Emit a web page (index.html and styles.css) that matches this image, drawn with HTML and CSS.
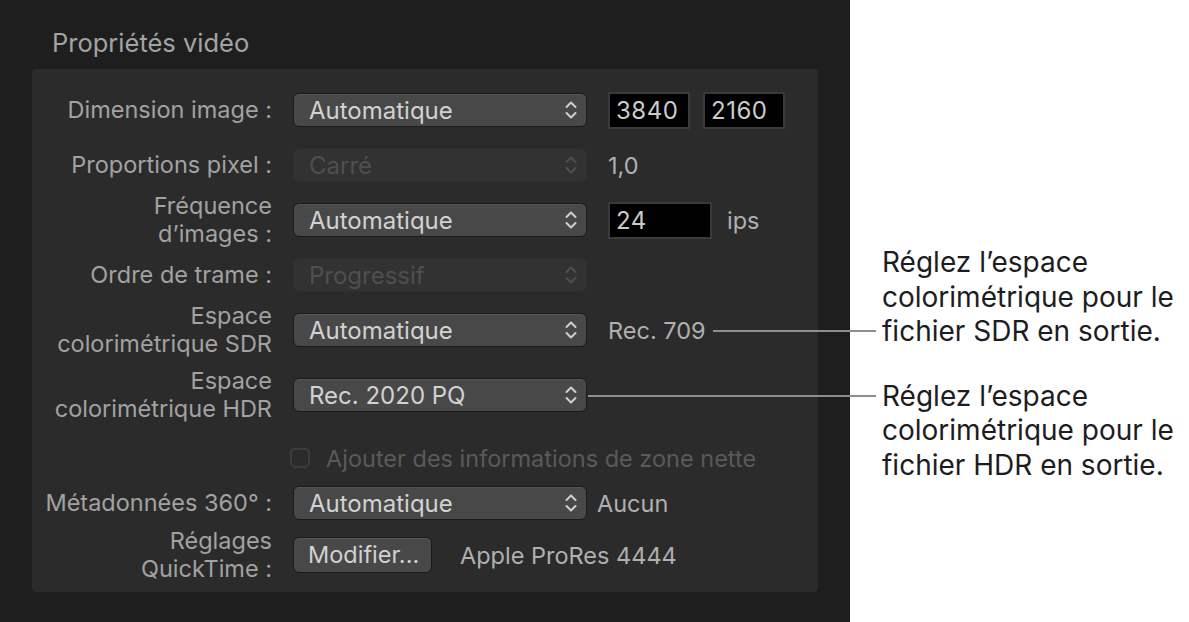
FILE: index.html
```html
<!DOCTYPE html>
<html lang="fr">

<head>
    <meta charset="UTF-8">
    <meta name="viewport" content="width=device-width, initial-scale=1.0">
    <title>Propriétés vidéo</title>
    <link rel="stylesheet" href="styles.css">
</head>

<body>
    <div class="page">
        <div class="panel">
            <h2 class="panel-title">Propriétés vidéo</h2>

            <div class="group">
                <div class="row">
                    <div class="label">Dimension image :</div>
                    <div class="popup">
                        <span>Automatique</span>
                        <svg class="chevrons" width="14" height="22" viewBox="0 0 14 22"><path d="M2.5 8 L7 3.5 L11.5 8 M2.5 14 L7 18.5 L11.5 14" /></svg>
                    </div>
                    <div class="field field-size">3840</div>
                    <div class="field field-size field-next">2160</div>
                </div>

                <div class="row">
                    <div class="label">Proportions pixel :</div>
                    <div class="popup disabled">
                        <span>Carré</span>
                        <svg class="chevrons" width="14" height="22" viewBox="0 0 14 22"><path d="M2.5 8 L7 3.5 L11.5 8 M2.5 14 L7 18.5 L11.5 14" /></svg>
                    </div>
                    <div class="value">1,0</div>
                </div>

                <div class="row">
                    <div class="label">Fréquence<br>d’images :</div>
                    <div class="popup">
                        <span>Automatique</span>
                        <svg class="chevrons" width="14" height="22" viewBox="0 0 14 22"><path d="M2.5 8 L7 3.5 L11.5 8 M2.5 14 L7 18.5 L11.5 14" /></svg>
                    </div>
                    <div class="field field-rate">24</div>
                    <div class="value value-unit">ips</div>
                </div>

                <div class="row">
                    <div class="label">Ordre de trame :</div>
                    <div class="popup disabled">
                        <span>Progressif</span>
                        <svg class="chevrons" width="14" height="22" viewBox="0 0 14 22"><path d="M2.5 8 L7 3.5 L11.5 8 M2.5 14 L7 18.5 L11.5 14" /></svg>
                    </div>
                </div>

                <div class="row">
                    <div class="label">Espace<br>colorimétrique SDR</div>
                    <div class="popup">
                        <span>Automatique</span>
                        <svg class="chevrons" width="14" height="22" viewBox="0 0 14 22"><path d="M2.5 8 L7 3.5 L11.5 8 M2.5 14 L7 18.5 L11.5 14" /></svg>
                    </div>
                    <div class="value">Rec. 709</div>
                </div>

                <div class="row row-hdr">
                    <div class="label">Espace<br>colorimétrique HDR</div>
                    <div class="popup">
                        <span>Rec. 2020 PQ</span>
                        <svg class="chevrons" width="14" height="22" viewBox="0 0 14 22"><path d="M2.5 8 L7 3.5 L11.5 8 M2.5 14 L7 18.5 L11.5 14" /></svg>
                    </div>
                </div>

                <div class="row row-check">
                    <div class="label"></div>
                    <div class="checkbox"></div>
                    <div class="check-text">Ajouter des informations de zone nette</div>
                </div>

                <div class="row row-meta">
                    <div class="label">Métadonnées 360° :</div>
                    <div class="popup">
                        <span>Automatique</span>
                        <svg class="chevrons" width="14" height="22" viewBox="0 0 14 22"><path d="M2.5 8 L7 3.5 L11.5 8 M2.5 14 L7 18.5 L11.5 14" /></svg>
                    </div>
                    <div class="value value-near">Aucun</div>
                </div>

                <div class="row">
                    <div class="label">Réglages<br>QuickTime :</div>
                    <div class="button">Modifier...</div>
                    <div class="value value-far">Apple ProRes 4444</div>
                </div>
            </div>
        </div>

        <div class="notes">
            <p class="note">Réglez l’espace colorimétrique pour le fichier SDR en sortie.</p>
            <p class="note note-hdr">Réglez l’espace colorimétrique pour le fichier HDR en sortie.</p>
        </div>

        <div class="leader leader-sdr"></div>
        <div class="leader leader-hdr"></div>
    </div>
</body>

</html>
```

FILE: styles.css
```css
body {
    margin: 0;
    background-color: #fff;
    font-family: Inter, "Noto Sans", sans-serif;
}

.page {
    position: relative;
    display: flex;
    width: 1189px;
    height: 622px;
    overflow: hidden;
}

.panel {
    width: 850px;
    height: 622px;
    background-color: #1e1e1e;
}

.panel-title {
    margin: 0;
    padding: 28px 0 0 52px;
    height: 69px;
    box-sizing: border-box;
    font-size: 25.5px;
    font-weight: 400;
    line-height: 30px;
    color: #a3a3a3;
}

.group {
    margin: 0 32px;
    height: 523px;
    box-sizing: border-box;
    padding-top: 19px;
    background-color: #2b2b2b;
    border-radius: 4px;
}

.row {
    display: flex;
    align-items: center;
    height: 44px;
    margin-bottom: 11px;
}

.row-hdr {
    margin-top: 21px;
    margin-bottom: 19px;
}

.row-check {
    margin-bottom: 1px;
}

.row-meta {
    margin-bottom: 8px;
}

.label {
    flex: none;
    width: 240px;
    margin-right: 21px;
    text-align: right;
    font-size: 23.5px;
    line-height: 28.5px;
    color: #a2a2a2;
}

.popup {
    flex: none;
    display: flex;
    align-items: center;
    justify-content: space-between;
    width: 294px;
    height: 34px;
    box-sizing: border-box;
    padding: 0 8px 0 15px;
    background-color: #484848;
    border: 1px solid #1a1a1a;
    border-radius: 6px;
    box-shadow: inset 0 1px 0 #555;
    font-size: 24px;
    color: #d2d2d2;
}

.chevrons path {
    fill: none;
    stroke: #cfcfcf;
    stroke-width: 2;
    stroke-linecap: round;
    stroke-linejoin: round;
}

.popup.disabled {
    background-color: #323232;
    border-color: #2e2e2e;
    box-shadow: none;
    color: #4f4f4f;
}

.popup.disabled .chevrons path {
    stroke: #4f4f4f;
}

.field {
    flex: none;
    height: 37px;
    box-sizing: border-box;
    margin-left: 21px;
    padding: 0 6px;
    background-color: #000;
    border: 2px solid #3a3a3a;
    font-size: 24px;
    letter-spacing: 0.5px;
    line-height: 33px;
    color: #cbcbcb;
}

.field-size {
    width: 82px;
}

.field-next {
    margin-left: 13px;
}

.field-rate {
    width: 104px;
}

.value {
    margin-left: 21px;
    font-size: 23.5px;
    color: #b0b0b0;
}

.value-unit {
    margin-left: 15px;
}

.value-near {
    margin-left: 10px;
}

.value-far {
    margin-left: 28px;
}

.checkbox {
    flex: none;
    width: 20px;
    height: 20px;
    box-sizing: border-box;
    margin-left: -3px;
    border: 2px solid #3c3c3c;
    border-radius: 5px;
}

.check-text {
    margin-left: 16px;
    font-size: 23.5px;
    color: #5a5a5a;
}

.button {
    flex: none;
    width: 139px;
    height: 36px;
    box-sizing: border-box;
    padding-left: 14px;
    background-color: #484848;
    border: 1px solid #1a1a1a;
    border-radius: 6px;
    box-shadow: inset 0 1px 0 #555;
    font-size: 23.5px;
    line-height: 34px;
    color: #d2d2d2;
}

.notes {
    flex: 1;
    padding: 245px 0 0 32px;
}

.note {
    margin: 0;
    width: 307px;
    font-size: 28px;
    line-height: 34.5px;
    color: #1d1d1f;
}

.note-hdr {
    margin-top: 30px;
}

.leader {
    position: absolute;
    height: 2px;
    background-color: #8e8e8e;
}

.leader-sdr {
    left: 713px;
    top: 330px;
    width: 163px;
}

.leader-hdr {
    left: 588px;
    top: 395px;
    width: 288px;
}
```
